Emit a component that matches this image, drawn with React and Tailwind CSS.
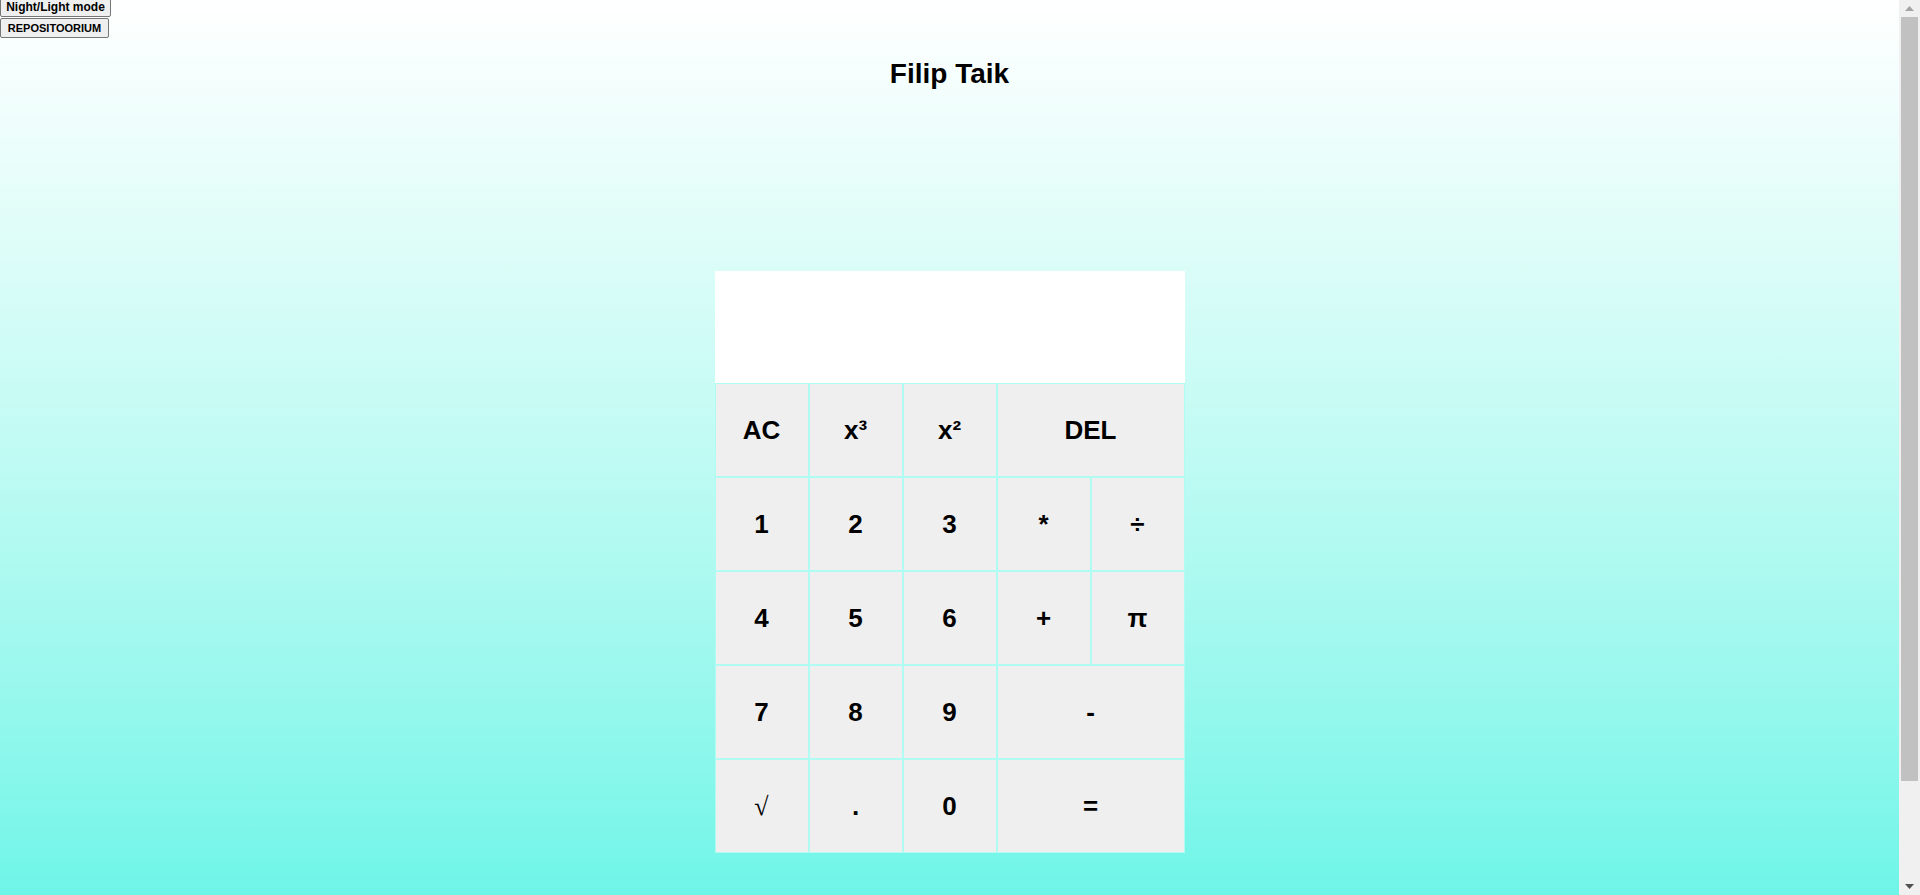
import React from "react";

const rows = [
  [["AC", 1], ["x³", 1], ["x²", 1], ["DEL", 2]],
  [["1", 1], ["2", 1], ["3", 1], ["*", 1], ["÷", 1]],
  [["4", 1], ["5", 1], ["6", 1], ["+", 1], ["π", 1]],
  [["7", 1], ["8", 1], ["9", 1], ["-", 2]],
  [["√", 1], [".", 1], ["0", 1], ["=", 2]],
];

function Scrollbar() {
  return (
    <div className="w-[21px] h-[895px] shrink-0 bg-[#f0f0f0] flex flex-col">
      <div className="h-[17px] flex items-center justify-center">
        <svg width="9" height="5" viewBox="0 0 9 5">
          <path d="M0 5 L4.5 0 L9 5 Z" fill="#a3a3a3" />
        </svg>
      </div>
      <div className="px-[2px] flex-1 flex flex-col">
        <div className="h-[764px] bg-[#c1c1c1]"></div>
      </div>
      <div className="h-[17px] flex items-center justify-center">
        <svg width="9" height="5" viewBox="0 0 9 5">
          <path d="M0 0 L9 0 L4.5 5 Z" fill="#505050" />
        </svg>
      </div>
    </div>
  );
}

export default function App() {
  return (
    <div className="h-[895px] overflow-hidden flex font-['Liberation_Sans',Arial,sans-serif] text-black">
      <div className="flex-1 h-[895px] bg-gradient-to-b from-white to-[#6ef5e8]">
        <div className="flex flex-col items-start">
          <button className="mt-[-4px] h-[21px] w-[111px] bg-[#efefef] border border-[#767676] rounded-[2px] text-[12px] font-bold leading-none px-[4px] whitespace-nowrap">
            Night/Light mode
          </button>
          <button className="mt-[1px] h-[20px] w-[109px] bg-[#efefef] border border-[#767676] rounded-[2px] text-[11px] font-bold leading-none px-[4px] whitespace-nowrap">
            REPOSITOORIUM
          </button>
        </div>
        <h1 className="mt-[21px] text-center text-[28px] font-bold leading-[30px]">Filip Taik</h1>
        <div className="mx-auto mt-[182px] w-[470px]">
          <div className="h-[112px] bg-white"></div>
          <div className="grid grid-cols-5">
            {rows.flatMap((row, ri) =>
              row.map(([label, span], ci) => (
                <button
                  key={ri + "-" + ci}
                  className={
                    (span === 2 ? "col-span-2 " : "") +
                    "h-[94px] bg-[#efefef] border border-[#b0fbf2] flex items-center justify-center text-[26px] " +
                    (label === "√" ? "font-['Liberation_Serif',serif] font-normal" : "font-bold")
                  }
                >
                  {label}
                </button>
              ))
            )}
          </div>
        </div>
      </div>
      <Scrollbar />
    </div>
  );
}
